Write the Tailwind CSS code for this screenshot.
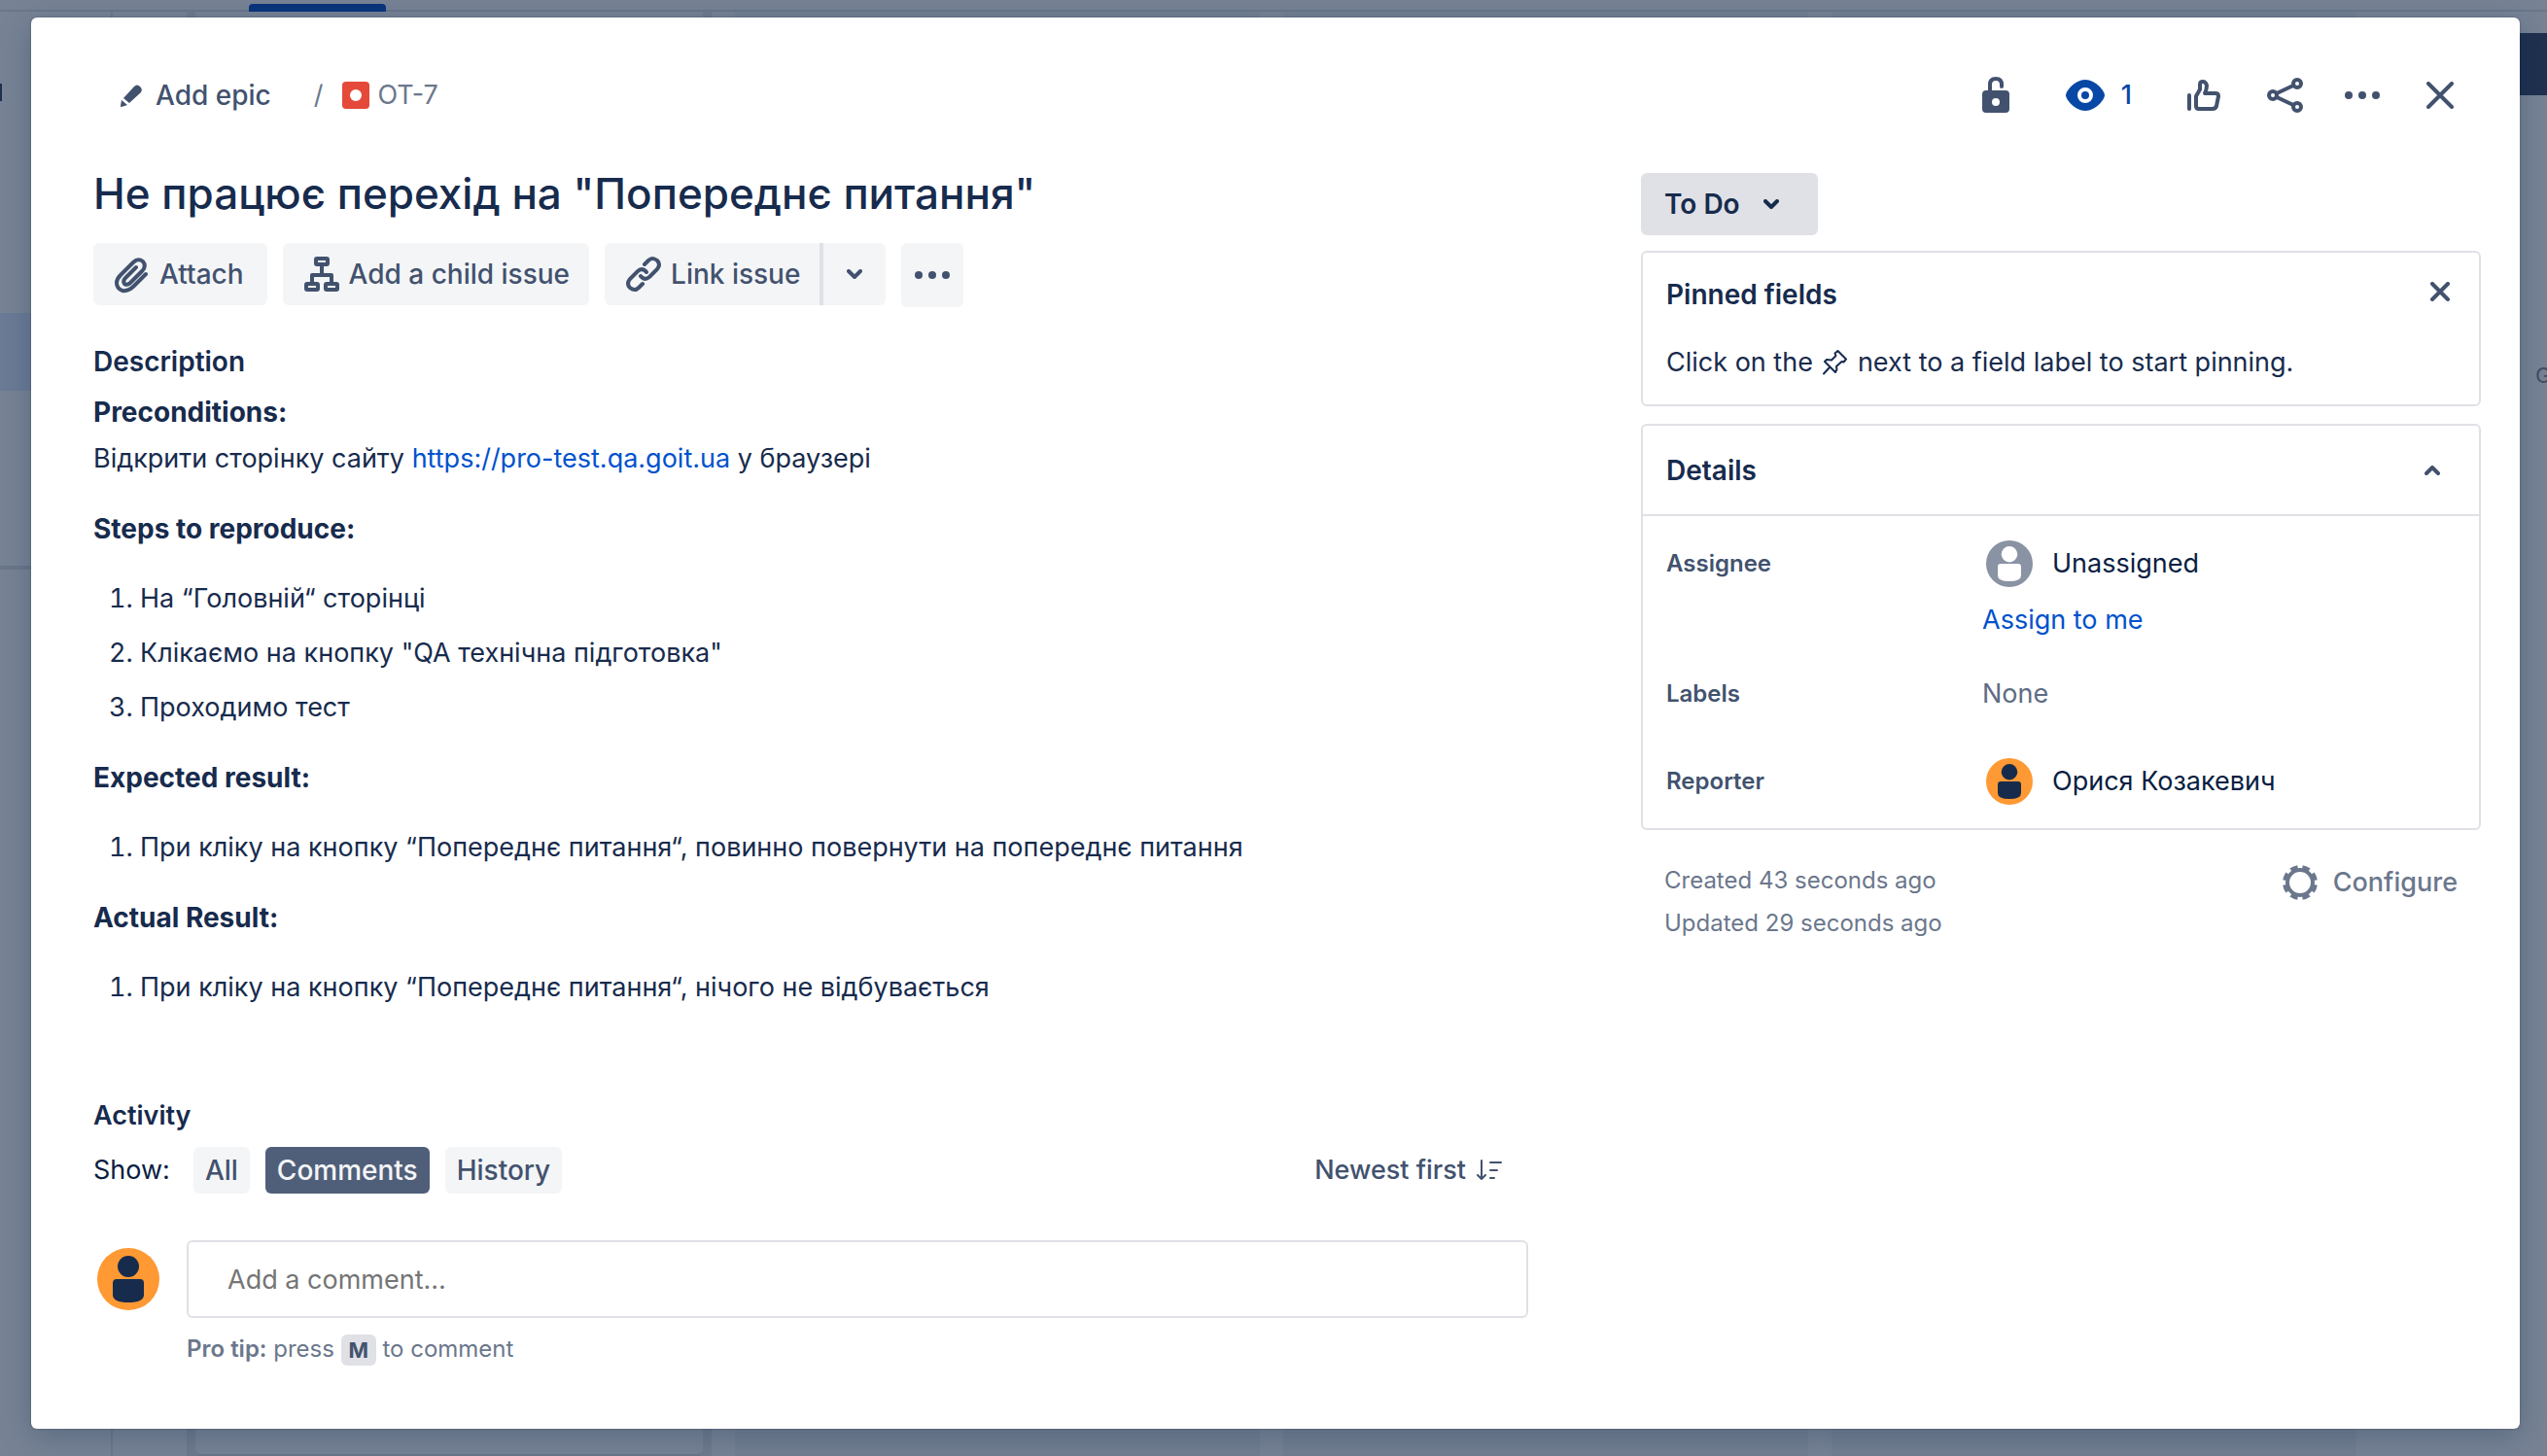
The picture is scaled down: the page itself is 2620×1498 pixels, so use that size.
<!DOCTYPE html>
<html lang="uk">
<head>
<meta charset="utf-8">
<title>OT-7</title>
<script src="https://cdn.jsdelivr.net/npm/@tailwindcss/browser@4"></script>
</head>
<body class="font-['Inter',sans-serif] text-[27px] leading-10 text-[#172b4d]">
<div class="relative min-h-screen overflow-hidden bg-[#778395]">

  <!-- Board behind the dialog -->
  <div class="absolute inset-0 flex flex-col" aria-hidden="true">
    <div class="h-3 border-b-2 border-[#6a778a] pt-1 pl-64"><div class="h-2 w-[141px] rounded-t-sm bg-[#09357b]"></div></div>
    <div class="flex grow">
      <div class="flex w-[116px] flex-col border-r-2 border-[#6d798b]">
        <div class="mt-[74px] h-[18px] w-[2px] bg-[#20304f]"></div>
        <div class="mt-[218px] h-20 bg-[#6b7b96]"></div>
        <div class="mt-[180px] h-1 bg-[#6a778a]"></div>
      </div>
      <div class="grid grow grid-cols-4 gap-6 pr-[196px] pl-[76px]">
        <div class="bg-[#6e7b8e] px-[9px]"><div class="h-full rounded-b-md border-b-2 border-[#6a778a] bg-[#778395]"></div></div>
        <div class="bg-[#727f91]"></div>
        <div class="bg-[#727f91]"></div>
        <div class="bg-[#727f91]"></div>
      </div>
    </div>
    <div class="absolute top-[34px] right-0 h-16 w-16 bg-[#20304f]"></div>
    <div class="absolute top-[366px] left-[2608px] text-[22px] text-[#3f4d66]">G</div>
  </div>

  <div role="dialog" aria-label="OT-7" class="relative mx-7 mt-[18px] mb-7 ml-8 min-h-[1452px] rounded-md bg-white shadow-[0_0_2px_#091e4266,0_8px_32px_#091e4240]">
    <header class="flex h-40 items-center justify-between pr-[68px] pl-[92px]">
      <nav class="flex items-center font-medium text-[#42526e]">
        <button class="flex items-center gap-3 text-[28px]">
          <svg class="size-6" viewBox="0 0 24 24" fill="currentColor"><path d="M3 15 14 3q3-3 6 0t1 6L9 20zM1 17l6 5-6 2q-1 0-1-1z"/></svg>Add epic</button>
        <span class="ml-11 font-normal text-[#6b778c]">/</span>
        <svg class="ml-5 size-7" viewBox="0 0 28 28"><rect width="28" height="28" rx="4" fill="#e5493a"/><circle cx="14" cy="14" r="6" fill="#fff"/></svg>
        <a href="#" class="ml-2 font-normal text-[#6b778c]">OT-7</a>
      </nav>
      <div class="flex items-center text-[#42526e]">
        <button aria-label="Unlock"><svg class="h-10 w-7" viewBox="0 0 28 40" fill="none"><path d="M8 17V9q0-6 6-6t6 6v2" stroke="currentColor" stroke-width="4" stroke-linecap="round"/><path fill-rule="evenodd" fill="currentColor" d="M4 15h20q4 0 4 4v15q0 4-4 4H4q-4 0-4-4V19q0-4 4-4Zm10 8a4 4 0 1 0 0 8 4 4 0 0 0 0-8Z"/></svg></button>
        <button class="ml-[58px] flex items-center gap-[17px] font-medium text-[#0747a6]"><svg class="h-8 w-10" viewBox="0 0 40 32"><path d="M20 0C31 0 40 12 40 16S31 32 20 32 0 20 0 16 9 0 20 0Z" fill="currentColor"/><circle cx="20" cy="16" r="6" stroke="#fff" stroke-width="4" fill="none"/></svg>1</button>
        <button aria-label="Like" class="ml-[57px]"><svg class="h-8 w-[34px]" viewBox="0 0 34 32" fill="none" stroke="currentColor" stroke-width="4" stroke-linejoin="round" stroke-linecap="round"><path d="M2 16v14" /><path d="M18 14h11q3 0 3 3l-2 10q-1 3-4 3H12q-3 0-3-3V17l4-7V5q0-3 3-3t4 4q0 4-2 8Z"/></svg></button>
        <button aria-label="Share" class="ml-12"><svg class="h-9 w-[38px]" viewBox="0 0 38 36" fill="none" stroke="currentColor" stroke-width="4"><circle cx="31" cy="6" r="4"/><circle cx="31" cy="30" r="4"/><circle cx="6" cy="18" r="4"/><path d="m10 16 17-8M10 20l17 8"/></svg></button>
        <button aria-label="Actions" class="ml-[42px]"><svg class="h-8 w-9" viewBox="0 0 36 32" fill="currentColor"><circle cx="4" cy="16" r="4"/><circle cx="18" cy="16" r="4"/><circle cx="32" cy="16" r="4"/></svg></button>
        <button aria-label="Close" class="ml-12"><svg class="size-7" viewBox="0 0 28 28" stroke="currentColor" stroke-width="4" stroke-linecap="round"><path d="m2 2 24 24M26 2 2 26"/></svg></button>
      </div>
    </header>

    <div class="flex pr-10 pl-16">
      <main class="min-w-0 grow">
        <h1 class="text-[44px] leading-[42px] font-medium">Не працює перехід на "Попереднє питання"</h1>
        <div class="mt-[30px] flex items-start gap-4 text-[28px] font-medium text-[#42526e]">
          <button class="flex h-16 items-center gap-2 rounded-md bg-[#f4f5f7] pr-6 pl-5">
            <svg class="size-10" viewBox="0 0 40 40" fill="none" stroke="currentColor" stroke-width="4" stroke-linecap="round"><path d="m34 20-12 12q-6 6-12 5-6-2-6-8 0-4 4-8L21 8q5-5 10-1 4 5-1 10L18 29q-3 3-6 1-2-3 1-6l11-11"/></svg>Attach</button>
          <button class="flex h-16 items-center gap-2 rounded-md bg-[#f4f5f7] px-5">
            <svg class="size-10" viewBox="0 0 40 40" fill="none" stroke="currentColor" stroke-width="4" stroke-linejoin="round"><rect x="14" y="4" width="12" height="6" rx="1"/><rect x="4" y="30" width="12" height="6" rx="1"/><rect x="24" y="30" width="12" height="6" rx="1"/><path d="M20 10v10M10 30v-9h20v9"/></svg>Add a child issue</button>
          <div class="flex">
            <button class="flex h-16 items-center gap-2 rounded-l-md bg-[#f4f5f7] px-5">
              <svg class="size-10" viewBox="0 0 40 40" fill="none" stroke="currentColor" stroke-width="4" stroke-linecap="round"><path d="m21 10 4-4q4-4 9 0 4 4 0 9l-8 8q-5 4-9-1M19 30l-4 4q-4 4-9 0-4-4 0-9l8-8q5-4 9 1"/></svg>Link issue</button>
            <button aria-label="More link options" class="flex h-16 w-[68px] items-center justify-center rounded-r-md border-l-4 border-[#dfe1e6] bg-[#f4f5f7]"><svg class="h-[10px] w-4" viewBox="0 0 16 10" fill="none" stroke="currentColor" stroke-width="4" stroke-linecap="round" stroke-linejoin="round"><path d="m2 2 6 6 6-6"/></svg></button>
          </div>
          <button aria-label="More" class="flex h-[66px] w-16 items-center justify-center rounded-md bg-[#f4f5f7]"><svg class="h-2 w-9" viewBox="0 0 36 8" fill="currentColor"><circle cx="4" cy="4" r="4"/><circle cx="18" cy="4" r="4"/><circle cx="32" cy="4" r="4"/></svg></button>
        </div>

        <h2 class="mt-9 text-[28px] font-semibold">Description</h2>
        <div class="mt-3">
          <p class="h-12 text-[28px] font-bold">Preconditions:</p>
          <p>Відкрити сторінку сайту <a href="#" class="text-[#0052cc]">https://pro-test.qa.goit.ua</a> у браузері</p>
          <p class="mt-8 text-[28px] font-bold">Steps to reproduce:</p>
          <ol class="mt-8 list-decimal space-y-4 pl-12">
            <li>На “Головній“ сторінці</li>
            <li>Клікаємо на кнопку "QA технічна підготовка"</li>
            <li>Проходимо тест</li>
          </ol>
          <p class="mt-8 text-[28px] font-bold">Expected result:</p>
          <ol class="mt-8 list-decimal pl-12"><li>При кліку на кнопку “Попереднє питання“, повинно повернути на попереднє питання</li></ol>
          <p class="mt-8 text-[28px] font-bold">Actual Result:</p>
          <ol class="mt-8 list-decimal pl-12"><li>При кліку на кнопку “Попереднє питання“, нічого не відбувається</li></ol>
        </div>

        <section class="w-[1476px] pt-[92px]">
          <h2 class="font-semibold">Activity</h2>
          <div class="mt-3 flex items-center justify-between pr-[26px]">
            <div class="flex items-center gap-4 text-[28px] font-medium text-[#42526e]">
              <span class="mr-2 text-[27px] font-normal text-[#091e42]">Show:</span>
              <button class="h-12 rounded-md bg-[#f4f5f7] px-3">All</button>
              <button class="h-12 rounded-md bg-[#505f79] px-3 text-[#f4f5f7]">Comments</button>
              <button class="h-12 rounded-md bg-[#f4f5f7] px-3">History</button>
            </div>
            <button class="flex items-center gap-[10px] font-medium text-[#42526e]">Newest first
              <svg class="h-6 w-7" viewBox="0 0 28 24" fill="none" stroke="currentColor" stroke-width="2" stroke-linecap="round" stroke-linejoin="round"><path d="M6 2v19m-4-4 4 4 4-4M15 4h11M15 12h7M15 20h4"/></svg></button>
          </div>
          <div class="mt-12 flex items-center">
            <svg class="ml-1 size-16 shrink-0" viewBox="0 0 64 64"><circle cx="32" cy="32" r="32" fill="#ff9933"/><circle cx="32" cy="19" r="11" fill="#172b4d"/><path d="M20 32h24q4 0 4 4v12q0 8-16 8t-16-8V36q0-4 4-4Z" fill="#172b4d"/></svg>
            <input aria-label="Add a comment" placeholder="Add a comment…" class="ml-7 h-20 grow rounded-md border-2 border-[#dfe1e6] px-10 placeholder:text-[#757575]">
          </div>
          <p class="mt-3 ml-24 text-[24px] text-[#6b778c]"><b class="font-semibold">Pro tip:</b> press <kbd class="inline-block h-8 w-9 rounded-md bg-[#dfe1e6] text-center align-middle font-['Inter',sans-serif] text-[22px] leading-8 font-bold text-[#42526e]">M</kbd> to comment</p>
        </section>
      </main>

      <aside class="w-[864px] shrink-0">
        <button class="flex h-16 items-center gap-6 rounded-md bg-[#dfe1e6] pr-10 pl-6 text-[28px] font-semibold">To Do
          <svg class="h-[10px] w-4" viewBox="0 0 16 10" fill="none" stroke="currentColor" stroke-width="4" stroke-linecap="round" stroke-linejoin="round"><path d="m2 2 6 6 6-6"/></svg></button>
        <section class="mt-4 h-40 rounded-md border-2 border-[#dfe1e6] px-6 pt-[23px]">
          <div class="flex justify-between pr-[6px]"><h2 class="text-[28px] font-semibold">Pinned fields</h2>
            <button aria-label="Dismiss" class="flex h-[34px] items-center text-[#42526e]"><svg class="size-5" viewBox="0 0 20 20" stroke="currentColor" stroke-width="4" stroke-linecap="round"><path d="m2 2 16 16M18 2 2 18"/></svg></button></div>
          <p class="mt-[30px] flex items-center">Click on the
            <svg class="mx-[10px] size-[26px]" viewBox="0 0 26 26" fill="none" stroke="currentColor" stroke-width="2" stroke-linejoin="round" stroke-linecap="round"><path d="M1 24.500 7 18M2 12l11 11 1.500-3-.5-3 5.500-5 2 .5L24 9.500 15.500 1l-3 2.500 1 2.500L9 10.500 4 10Z"/></svg>next to a field label to start pinning.</p>
        </section>
        <section class="mt-[18px] rounded-md border-2 border-[#dfe1e6]">
          <div class="flex h-[93px] items-center justify-between border-b-2 border-[#dfe1e6] pr-10 pl-6"><h2 class="text-[28px] font-semibold">Details</h2>
            <button aria-label="Collapse" class="text-[#42526e]"><svg class="h-[10px] w-4" viewBox="0 0 16 10" fill="none" stroke="currentColor" stroke-width="4" stroke-linecap="round" stroke-linejoin="round"><path d="m2 8 6-6 6 6"/></svg></button></div>
          <dl class="grid grid-cols-[325px_1fr] pt-[25px] pb-6 pl-6 text-[#091e42]">
            <dt class="text-[24px] leading-[48px] font-semibold text-[#42526e]">Assignee</dt>
            <dd><div class="flex items-center gap-5 pl-1"><svg class="size-12" viewBox="0 0 64 64"><circle cx="32" cy="32" r="32" fill="#8993a4"/><circle cx="32" cy="19" r="11" fill="#fff"/><path d="M20 32h24q4 0 4 4v12q0 8-16 8t-16-8V36q0-4 4-4Z" fill="#fff"/></svg>Unassigned</div>
              <a href="#" class="mt-[14px] block text-[#0052cc]">Assign to me</a></dd>
            <dt class="mt-9 text-[24px] font-semibold text-[#42526e]">Labels</dt><dd class="mt-9 text-[#5e6c84]">None</dd>
            <dt class="mt-[46px] text-[24px] leading-[48px] font-semibold text-[#42526e]">Reporter</dt>
            <dd class="mt-[46px] flex items-center gap-5 pl-1"><svg class="size-12" viewBox="0 0 64 64"><circle cx="32" cy="32" r="32" fill="#ff9933"/><circle cx="32" cy="19" r="11" fill="#172b4d"/><path d="M20 32h24q4 0 4 4v12q0 8-16 8t-16-8V36q0-4 4-4Z" fill="#172b4d"/></svg>Орися Козакевич</dd>
          </dl>
        </section>
        <div class="mt-[30px] flex items-start justify-between pr-6 pl-6 text-[#6b778c]">
          <div class="text-[24px] leading-[44px]"><p>Created 43 seconds ago</p><p>Updated 29 seconds ago</p></div>
          <button class="mt-1 flex items-center gap-4 font-medium"><svg class="size-9" viewBox="0 0 36 36" fill="none" stroke="currentColor"><circle cx="18" cy="18" r="13" stroke-width="4"/><circle cx="18" cy="18" r="16" stroke-width="4" pathLength="80" stroke-dasharray="6 4" stroke-dashoffset="-2"/></svg>Configure</button>
        </div>
      </aside>
    </div>
  </div>
</div>
</body>
</html>
